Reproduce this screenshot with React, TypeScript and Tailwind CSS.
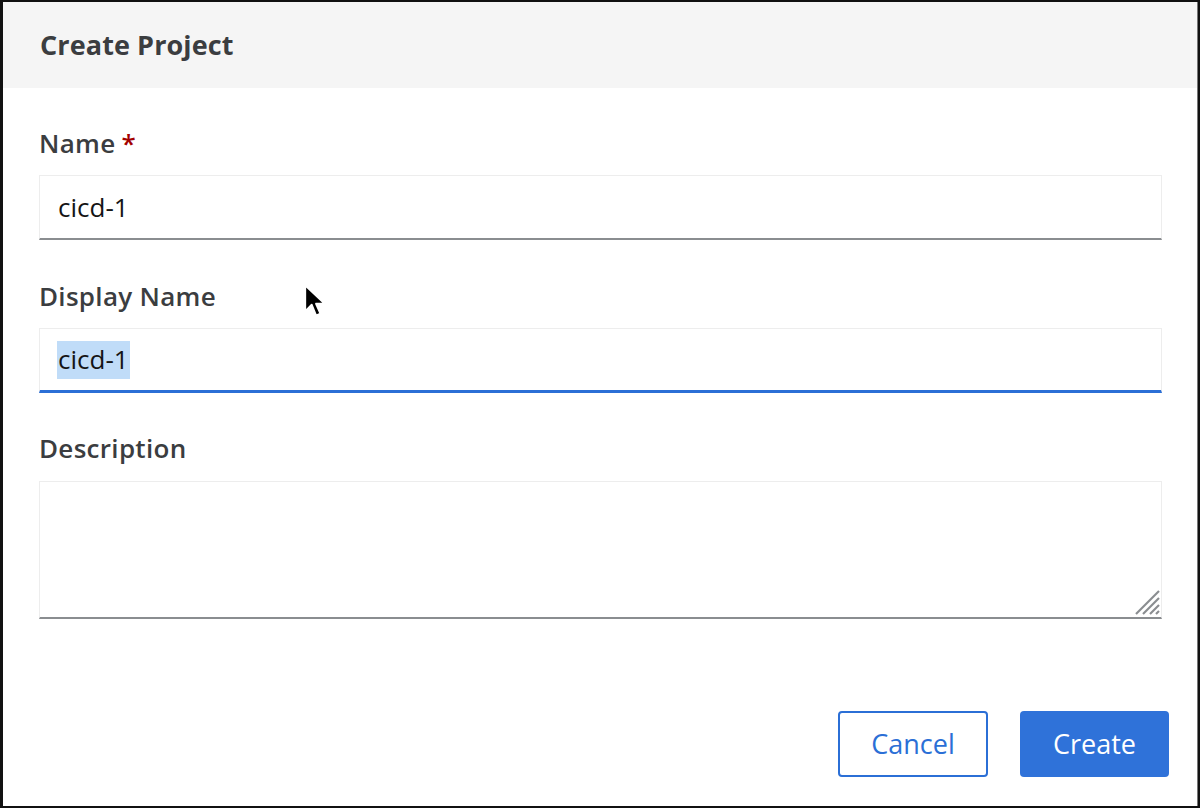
import React from "react";

const font = { fontFamily: '"Open Sans", "Noto Sans", sans-serif' };

export default function App() {
  return (
    <div className="w-[1200px] h-[808px] bg-[#111] pt-[2px] pl-[3px] pr-[2px] pb-[2px] relative" style={font}>
      <div className="w-full h-full bg-white flex flex-col border-r border-[#777]">
        <div className="h-[86px] bg-[#f5f5f5] flex items-center pl-[37px]">
          <h1 className="text-[27px] font-bold text-[#3b3d40] tracking-[0.1px]">Create Project</h1>
        </div>
        <div className="flex flex-col pl-[36px] pr-[35px] pt-[37px]">
          <label className="h-[36px] flex items-center text-[26px] font-semibold text-[#3b3d40] tracking-[0.3px]">
            Name<span className="text-[#a30000] ml-[6px]">*</span>
          </label>
          <div className="mt-[14px] h-[65px] border border-[#ededed] border-b-2 border-b-[#8a8d90] flex items-center pl-[18px] text-[26px] text-[#151515]">
            cicd-1
          </div>
          <label className="mt-[38px] h-[36px] flex items-center text-[26px] font-semibold text-[#3b3d40] tracking-[0.3px]">
            Display Name
          </label>
          <div className="mt-[14px] h-[65px] border border-[#ededed] border-b-[3px] border-b-[#2b6fd6] flex items-center pl-[17px] text-[26px] text-[#151515]">
            <span className="bg-[#c0dcf8] h-[38px] flex items-center px-[1px]">cicd-1</span>
          </div>
          <label className="mt-[37px] h-[36px] flex items-center text-[26px] font-semibold text-[#3b3d40] tracking-[0.3px]">
            Description
          </label>
          <div className="mt-[15px] h-[138px] border border-[#ededed] border-b-2 border-b-[#8a8d90] relative">
            <svg className="absolute right-[1px] bottom-[2px]" width="26" height="26" viewBox="0 0 26 26">
              <g stroke="#8a8d90" strokeWidth="2.2" strokeLinecap="butt">
                <line x1="2" y1="25" x2="25" y2="2" />
                <line x1="9" y1="25" x2="25" y2="9" />
                <line x1="16" y1="25" x2="25" y2="16" />
                <line x1="22" y1="25" x2="25" y2="22" />
              </g>
            </svg>
          </div>
        </div>
        <div className="flex justify-end gap-[32px] pr-[28px] mt-[92px]">
          <button className="w-[150px] h-[66px] border-2 border-[#2b6fd6] rounded-[4px] text-[#2b6fd6] text-[27px] bg-white">
            Cancel
          </button>
          <button className="w-[149px] h-[66px] rounded-[4px] bg-[#2f72d9] text-white text-[27px]">
            Create
          </button>
        </div>
      </div>
      <svg className="absolute left-[303px] top-[283px]" width="24" height="36" viewBox="0 0 22 33">
        <path d="M2 2 L2 26 L8 20 L12 30 L16 28 L12 19 L20 19 Z" fill="#000" stroke="#fff" strokeWidth="1.8" strokeLinejoin="round" />
      </svg>
    </div>
  );
}
